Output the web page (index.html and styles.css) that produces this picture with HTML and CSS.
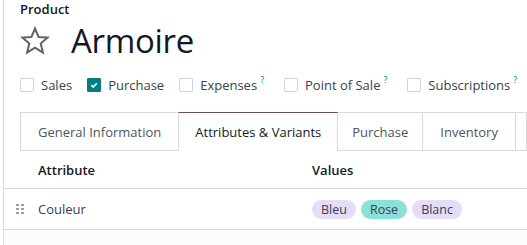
FILE: index.html
```html
<!DOCTYPE html>
<html>
<head>
<meta charset="utf-8">
<link rel="stylesheet" href="styles.css">
</head>
<body>
<div class="sheet">
  <div class="label">Product</div>
  <div class="title-row">
    <svg class="star" width="30" height="30" viewBox="0 0 30 30"><path d="M15 2.5 L18.6 11 L27.5 11.6 L20.7 17.5 L22.9 26.5 L15 21.6 L7.1 26.5 L9.3 17.5 L2.5 11.6 L11.4 11 Z" fill="none" stroke="#5f636d" stroke-width="2" stroke-linejoin="miter"/></svg>
    <h1 class="name">Armoire</h1>
  </div>
  <div class="options">
    <label class="opt"><span class="cb"></span>Sales</label>
    <label class="opt"><span class="cb checked"><svg width="10" height="10" viewBox="0 0 10 10"><path d="M2.3 5.2 L4.2 7 L7.8 3.2" fill="none" stroke="#fff" stroke-width="1.6"/></svg></span>Purchase</label>
    <label class="opt"><span class="cb"></span>Expenses<sup class="q">?</sup></label>
    <label class="opt"><span class="cb"></span>Point of Sale<sup class="q">?</sup></label>
    <label class="opt"><span class="cb"></span>Subscriptions<sup class="q">?</sup></label>
  </div>
  <div class="tabs">
    <div class="tab">General Information</div>
    <div class="tab active">Attributes &amp; Variants</div>
    <div class="tab tight">Purchase</div>
    <div class="tab">Inventory</div>
    <div class="tab more"></div>
  </div>
  <div class="table">
    <div class="thead">
      <div class="c-handle"></div>
      <div class="c-attr">Attribute</div>
      <div class="c-vals">Values</div>
    </div>
    <div class="trow">
      <div class="c-handle"><svg width="8" height="10" viewBox="0 0 8 10"><g fill="#9aa0a6"><rect x="0" y="0" width="3" height="2"/><rect x="5" y="0" width="3" height="2"/><rect x="0" y="4" width="3" height="2"/><rect x="5" y="4" width="3" height="2"/><rect x="0" y="8" width="3" height="2"/><rect x="5" y="8" width="3" height="2"/></g></svg></div>
      <div class="c-attr">Couleur</div>
      <div class="c-vals">
        <span class="tag purple">Bleu</span>
        <span class="tag teal">Rose</span>
        <span class="tag purple">Blanc</span>
      </div>
    </div>
    <div class="addrow">
      <div class="c-handle"></div>
      <a class="add">Add a line</a>
    </div>
  </div>
</div>
</body>
</html>
```
FILE: styles.css
```css
html, body {
  margin: 0;
  padding: 0;
  background: #fff;
}
body {
  font-family: "Open Sans", "Noto Sans", sans-serif;
  color: #374151;
  font-size: 13px;
  overflow: hidden;
  width: 527px;
  height: 245px;
}
.sheet {
  margin-left: 3px;
  border-left: 1px solid #d8dadd;
  padding-left: 16px;
  padding-top: 1px;
  height: 245px;
  box-sizing: border-box;
  overflow: hidden;
}
.label {
  font-weight: 600;
  color: #111827;
  font-size: 13px;
  line-height: 17px;
}
.title-row {
  display: flex;
  align-items: center;
  gap: 21px;
  height: 42px;
  margin-top: 2px;
}
.star {
  display: block;
}
.name {
  margin: 0;
  font-weight: 400;
  font-size: 33px;
  line-height: 40px;
  color: #111827;
  letter-spacing: -0.3px;
}
.options {
  display: flex;
  gap: 15px;
  margin-top: 8px;
  height: 30px;
  align-items: center;
  white-space: nowrap;
}
.opt {
  display: flex;
  align-items: center;
  font-weight: 500;
  color: #374151;
}
.cb {
  width: 12px;
  height: 12px;
  border: 1px solid #d1d5db;
  border-radius: 1px;
  margin-right: 7px;
  display: flex;
  align-items: center;
  justify-content: center;
  background: #fff;
}
.cb.checked {
  background: #017e84;
  border-color: #017e84;
}
.cb svg { display: block; }
.q {
  font-size: 9px;
  color: #017e84;
  margin-left: 3px;
  margin-right: 5px;
  align-self: flex-start;
  line-height: 9px;
  margin-top: -1px;
}
.tabs {
  display: flex;
  margin-top: 12px;
  height: 38px;
  border-bottom: 1px solid #d8dadd;
  white-space: nowrap;
}
.tab {
  padding: 0 17px;
  display: flex;
  align-items: center;
  border: 1px solid #d8dadd;
  border-bottom: none;
  margin-left: -1px;
  color: #4b5563;
  background: #fff;
}
.tab:first-child { margin-left: 0; }
.tab.tight {
  padding: 0 14px;
}
.tab.active {
  border-top: 1px solid #714b67;
  color: #111827;
  margin-bottom: -1px;
  position: relative;
  z-index: 1;
  padding: 0 16px;
}
.tab.more {
  flex: 1;
  padding: 0;
}
.table {
  margin-left: -16px;
}
.thead, .trow, .addrow {
  display: flex;
  align-items: center;
  border-bottom: 1px solid #d8dadd;
}
.thead {
  height: 37px;
  font-weight: 600;
  color: #111827;
}
.trow {
  height: 40px;
}
.addrow {
  height: 30px;
  background: #fbfbfb;
  border-bottom: none;
  align-items: flex-end;
}
.c-handle {
  width: 34px;
  padding-left: 12px;
  box-sizing: border-box;
  display: flex;
  align-items: center;
}
.c-attr {
  width: 274px;
}
.c-vals {
  display: flex;
  gap: 5px;
}
.tag {
  display: inline-block;
  padding: 0 9px;
  border-radius: 10px;
  height: 19px;
  line-height: 19px;
  font-size: 12.5px;
  color: #374151;
}
.tag.purple { background: #e5dcfa; }
.tag.teal { background: #8be0d8; }
.add {
  color: #017e84;
  margin-bottom: -6px;
}
```
